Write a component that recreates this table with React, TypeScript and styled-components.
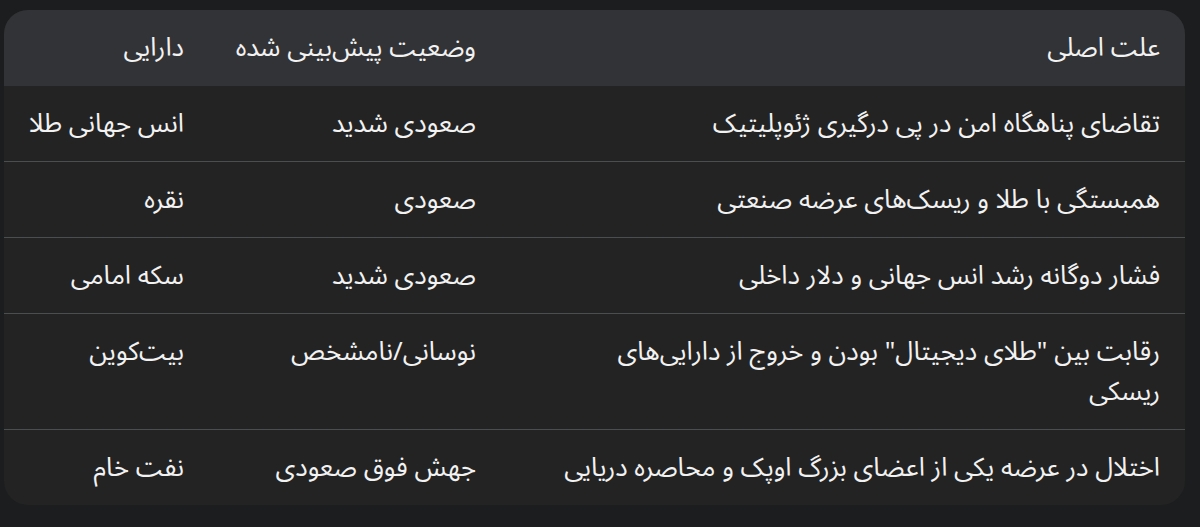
import React from "react";
import styled, { createGlobalStyle } from "styled-components";

const Global = createGlobalStyle`
  html, body {
    margin: 0;
    padding: 0;
    background: #1c1d1f;
  }
  body {
    font-family: "Noto Sans Arabic", "Noto Sans", "DejaVu Sans", sans-serif;
  }
`;

const Page = styled.div`
  width: 1200px;
  height: 527px;
  box-sizing: border-box;
  padding: 10px 15px 0 4px;
  background: #1c1d1f;
`;

const Card = styled.div`
  direction: rtl;
  width: 1181px;
  border-radius: 24px;
  overflow: hidden;
  background: #232323;
`;

const Table = styled.table`
  width: 1181px;
  table-layout: fixed;
  border-collapse: collapse;
  color: #f2f2f2;
  font-size: 26px;
  line-height: 40px;
`;

const HeadRow = styled.tr`
  background: #323336;
`;

const BodyRow = styled.tr<{ $last?: boolean }>`
  border-bottom: ${(p) => (p.$last ? "none" : "1px solid #4b4e4f")};
`;

const Th = styled.th`
  text-align: right;
  font-weight: 400;
  white-space: nowrap;
  padding: 18px 24px 18px 0;
  &:first-child {
    padding-right: 25px;
  }
`;

const Td = styled.td`
  text-align: right;
  vertical-align: top;
  white-space: nowrap;
  padding: 18px 24px 17px 0;
  &:first-child {
    white-space: normal;
    padding-right: 25px;
    padding-left: 53px;
  }
`;

const rows = [
  ["تقاضای پناهگاه امن در پی درگیری ژئوپلیتیک", "صعودی شدید", "انس جهانی طلا"],
  ["همبستگی با طلا و ریسک‌های عرضه صنعتی", "صعودی", "نقره"],
  ["فشار دوگانه رشد انس جهانی و دلار داخلی", "صعودی شدید", "سکه امامی"],
  ["رقابت بین \"طلای دیجیتال\" بودن و خروج از دارایی‌های ریسکی", "نوسانی/نامشخص", "بیت‌کوین"],
  ["اختلال در عرضه یکی از اعضای بزرگ اوپک و محاصره دریایی", "جهش فوق صعودی", "نفت خام"],
];

export default function App() {
  return (
    <Page>
      <Global />
      <Card>
        <Table>
          <colgroup>
            <col style={{ width: 685 }} />
            <col style={{ width: 292 }} />
            <col style={{ width: 204 }} />
          </colgroup>
          <thead>
            <HeadRow>
              <Th>علت اصلی</Th>
              <Th>وضعیت پیش‌بینی شده</Th>
              <Th>دارایی</Th>
            </HeadRow>
          </thead>
          <tbody>
            {rows.map((r, i) => (
              <BodyRow key={i} $last={i === rows.length - 1}>
                <Td>{r[0]}</Td>
                <Td>{r[1]}</Td>
                <Td>{r[2]}</Td>
              </BodyRow>
            ))}
          </tbody>
        </Table>
      </Card>
    </Page>
  );
}
